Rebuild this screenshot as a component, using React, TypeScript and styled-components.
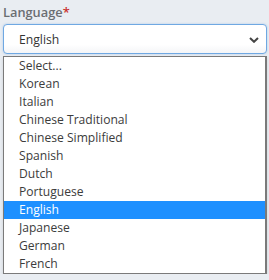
import styled, { createGlobalStyle } from "styled-components";

const GlobalStyle = createGlobalStyle`
    html, body {
        margin: 0;
        padding: 0;
        background: #e9edf2;
        font-family: "Open Sans", "Noto Sans", sans-serif;
    }
`;

const languages = [
    'Select...',
    'Korean',
    'Italian',
    'Chinese Traditional',
    'Chinese Simplified',
    'Spanish',
    'Dutch',
    'Portuguese',
    'English',
    'Japanese',
    'German',
    'French',
];

const Field = styled.div`
    display: flex;
    flex-direction: column;
    padding: 3px 2px 0 3px;
    width: 264px;
`;

const Label = styled.label`
    font-size: 12.8px;
    font-weight: 600;
    color: #6b6e72;
    line-height: 18px;
    margin-bottom: 3px;
`;

const Required = styled.span`
    color: #c9302c;
`;

const SelectBox = styled.div`
    box-sizing: border-box;
    height: 30px;
    display: flex;
    align-items: center;
    justify-content: space-between;
    padding: 1px 7px 0 15px;
    background: linear-gradient(#ffffff 70%, #f4f5f7);
    border: 1px solid #6fa8e2;
    border-radius: 4px;
    box-shadow: 0 0 2px rgba(102, 160, 225, 0.5);
    font-size: 12.2px;
    color: #333;
`;

const Chevron = styled.svg`
    width: 10px;
    height: 6px;
`;

const List = styled.ul`
    box-sizing: border-box;
    list-style: none;
    margin: 2px 0 0;
    padding: 0;
    background: #fff;
    border: 1px solid #7a7a7a;
    border-right-width: 2px;
    box-shadow: 0 2px 3px rgba(0, 0, 0, 0.12);
`;

const Option = styled.li<{ $active?: boolean }>`
    height: 18px;
    line-height: 18px;
    padding-left: 15px;
    font-size: 12.1px;
    color: ${p => p.$active ? '#fff' : '#3c3c3c'};
    background: ${p => p.$active ? '#1e90ff' : 'transparent'};
    white-space: nowrap;
`;

const App = () => {
    const selected = 'English';

    return (
        <>
            <GlobalStyle />
            <Field>
                <Label>Language<Required>*</Required></Label>
                <SelectBox>
                    <span>{selected}</span>
                    <Chevron viewBox="0 0 10 6">
                        <path d="M1 1 L5 4.8 L9 1" fill="none" stroke="#444" strokeWidth="2" />
                    </Chevron>
                </SelectBox>
                <List>
                    {languages.map(l => (
                        <Option key={l} $active={l === selected}>{l}</Option>
                    ))}
                </List>
            </Field>
        </>
    );
};

export default App;
